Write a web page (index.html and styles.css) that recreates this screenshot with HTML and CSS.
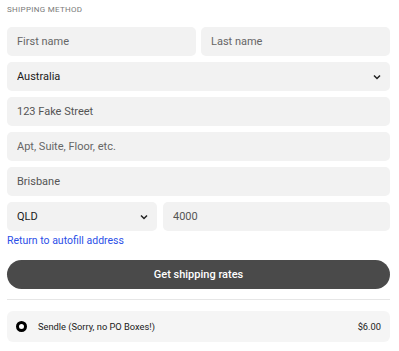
FILE: index.html
```html
<!DOCTYPE html>
<html lang="en">
<head>
    <meta charset="UTF-8">
    <meta name="viewport" content="width=device-width, initial-scale=1.0">
    <title>Shipping Method</title>
    <link rel="stylesheet" href="styles.css">
</head>
<body>
    <div class="container">
        <h2 class="section-title">Shipping method</h2>
        <form class="address-form">
            <div class="row two">
                <input class="field" type="text" placeholder="First name">
                <input class="field" type="text" placeholder="Last name">
            </div>
            <div class="select-wrap">
                <select class="field select">
                    <option>Australia</option>
                </select>
                <svg class="chevron" width="8" height="6" viewBox="0 0 8 6"><path d="M1 1.5 L4 4.5 L7 1.5" fill="none" stroke="#222" stroke-width="1.5"/></svg>
            </div>
            <input class="field value" type="text" value="123 Fake Street">
            <input class="field" type="text" placeholder="Apt, Suite, Floor, etc.">
            <input class="field value" type="text" value="Brisbane">
            <div class="row state">
                <div class="select-wrap">
                    <select class="field select">
                        <option>QLD</option>
                    </select>
                    <svg class="chevron" width="8" height="6" viewBox="0 0 8 6"><path d="M1 1.5 L4 4.5 L7 1.5" fill="none" stroke="#222" stroke-width="1.5"/></svg>
                </div>
                <input class="field value" type="text" value="4000">
            </div>
        </form>
        <a class="autofill-link" href="#">Return to autofill address</a>
        <button class="rates-btn" type="button">Get shipping rates</button>
        <hr class="divider">
        <label class="rate-option">
            <span class="radio"></span>
            <span class="rate-name">Sendle (Sorry, no PO Boxes!)</span>
            <span class="rate-price">$6.00</span>
        </label>
    </div>
</body>
</html>
```

FILE: styles.css
```css
body {
    margin: 0;
    font-family: Roboto, "Noto Sans", sans-serif;
    background: white;
    color: #1a1a1a;
}
.container {
    width: 383px;
    padding-left: 7px;
}
.section-title {
    margin: 0 0 7px;
    font-size: 8px;
    line-height: 20px;
    font-weight: 400;
    text-transform: uppercase;
    letter-spacing: 0.3px;
    color: #7a7a7a;
}
.address-form {
    display: flex;
    flex-direction: column;
    gap: 6px;
}
.row {
    display: grid;
    gap: 5px;
}
.row.two {
    grid-template-columns: 1fr 1fr;
}
.row.state {
    grid-template-columns: 150px 1fr;
    gap: 6px;
}
.field {
    width: 100%;
    height: 29px;
    box-sizing: border-box;
    border: none;
    border-radius: 5px;
    background: #f2f2f2;
    padding: 0 10px;
    font-family: inherit;
    font-size: 11px;
    color: #1a1a1a;
    outline: none;
}
.field::placeholder {
    color: #666;
}
.field.value {
    color: #555;
}
.select-wrap {
    position: relative;
}
.select {
    appearance: none;
    -webkit-appearance: none;
    display: block;
}
.chevron {
    position: absolute;
    right: 9px;
    top: 12px;
}
.autofill-link {
    display: block;
    margin-top: 3px;
    font-size: 10.5px;
    line-height: 14px;
    color: #2c4fe8;
    text-decoration: none;
}
.rates-btn {
    display: block;
    width: 100%;
    height: 29px;
    margin-top: 12px;
    border: none;
    border-radius: 15px;
    background: #4a4a4a;
    color: white;
    font-family: inherit;
    font-size: 11px;
    font-weight: 500;
}
.divider {
    margin: 10px 0 0;
    border: none;
    border-top: 1px solid #e6e6e6;
}
.rate-option {
    display: flex;
    align-items: center;
    height: 31px;
    margin-top: 11px;
    padding: 0 9px 0 9px;
    border-radius: 6px;
    background: #f5f5f5;
    font-size: 9.3px;
    color: #1a1a1a;
}
.radio {
    width: 5px;
    height: 5px;
    border: 3.5px solid #000;
    border-radius: 50%;
    background: white;
}
.rate-name {
    margin-left: 11px;
    flex: 1;
}
```
